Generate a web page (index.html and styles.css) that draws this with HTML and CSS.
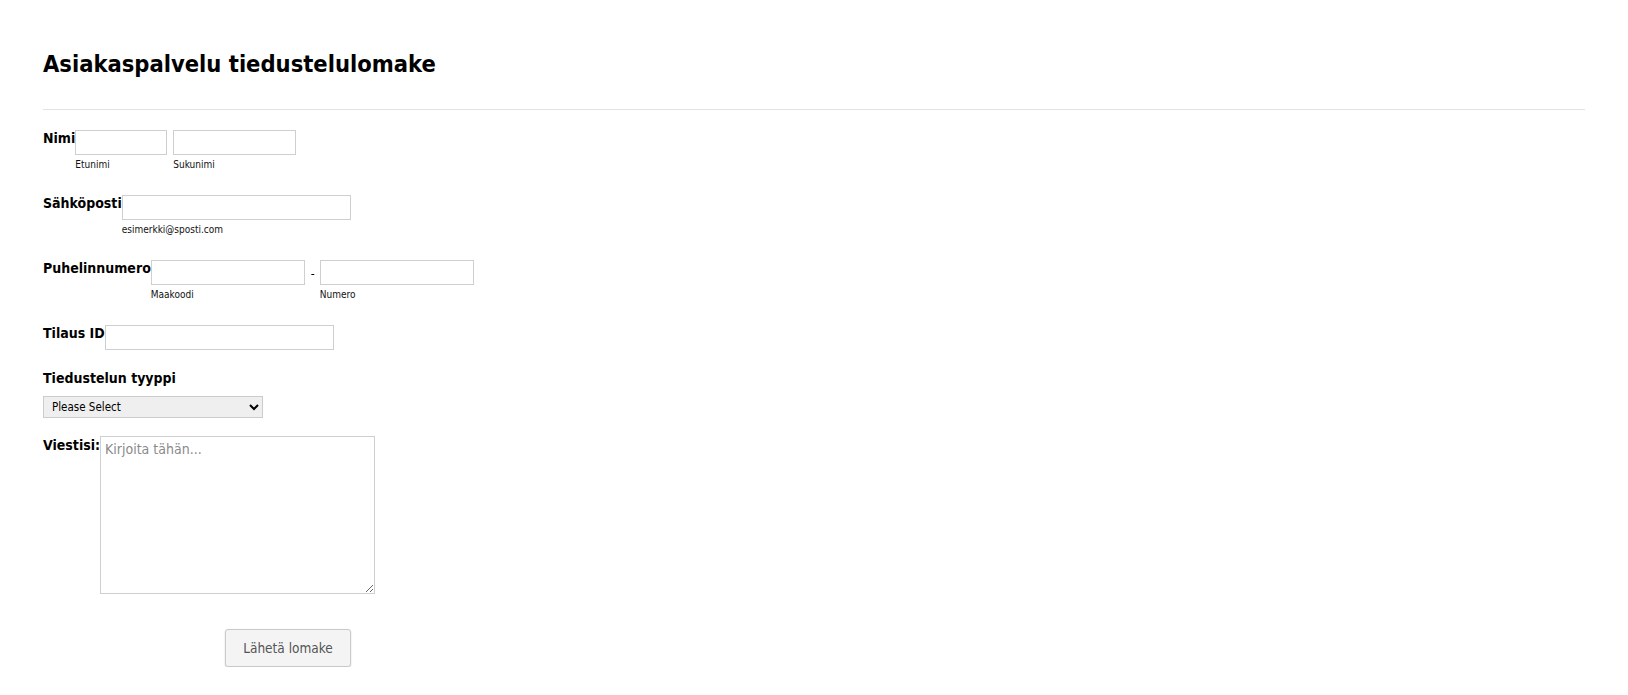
FILE: index.html
```
<!DOCTYPE html>
<html lang="fi">

<head>
  <meta charset="UTF-8" />
  <title>Asiakaspalvelu tiedustelulomake</title>
  <link rel="stylesheet" href="styles.css">
</head>

<body>
  <form class="inquiry-form">
    <h1 class="form-title">Asiakaspalvelu tiedustelulomake</h1>

    <div class="form-row">
      <label class="row-label">Nimi</label>
      <div class="field">
        <input type="text" class="input-first">
        <span class="sublabel">Etunimi</span>
      </div>
      <div class="field">
        <input type="text" class="input-last">
        <span class="sublabel">Sukunimi</span>
      </div>
    </div>

    <div class="form-row">
      <label class="row-label">Sähköposti</label>
      <div class="field">
        <input type="email" class="input-wide">
        <span class="sublabel">esimerkki@sposti.com</span>
      </div>
    </div>

    <div class="form-row">
      <label class="row-label">Puhelinnumero</label>
      <div class="field">
        <input type="tel" class="input-phone">
        <span class="sublabel">Maakoodi</span>
      </div>
      <span class="dash">-</span>
      <div class="field">
        <input type="tel" class="input-phone">
        <span class="sublabel">Numero</span>
      </div>
    </div>

    <div class="form-row no-sub">
      <label class="row-label">Tilaus ID</label>
      <div class="field">
        <input type="text" class="input-wide">
      </div>
    </div>

    <div class="form-block">
      <label class="block-label">Tiedustelun tyyppi</label>
      <select class="type-select">
        <option>Please Select</option>
        <option>Tilaus</option>
        <option>Toimitus</option>
        <option>Palautus</option>
        <option>Muu</option>
      </select>
    </div>

    <div class="form-row message-row">
      <label class="row-label msg-label">Viestisi:</label>
      <textarea class="message" placeholder="Kirjoita tähän..."></textarea>
    </div>

    <div class="button-row">
      <button type="submit" class="submit-btn">Lähetä lomake</button>
    </div>
  </form>
</body>

</html>
```

FILE: styles.css
```
body {
  margin: 0;
  font-family: "DejaVu Sans Condensed", "DejaVu Sans", sans-serif;
  color: #000;
  background: #fff;
}

.inquiry-form {
  padding: 0 43px;
}

.form-title {
  margin: 0 0 20px;
  padding-top: 49px;
  padding-bottom: 30px;
  font-size: 23.5px;
  line-height: 30px;
  font-weight: bold;
  border-bottom: 1px solid #e2e2e2;
}

.form-row {
  display: flex;
  align-items: flex-start;
  margin-bottom: 24px;
}

.form-row.no-sub {
  margin-bottom: 20px;
}

.row-label {
  font-size: 14px;
  font-weight: bold;
  line-height: 17px;
}

.field {
  display: flex;
  flex-direction: column;
  margin-right: 6px;
}

.field input {
  height: 25px;
  box-sizing: border-box;
  border: 1px solid #cfcfcf;
  padding: 2px 4px;
  font-family: inherit;
  font-size: 12px;
}

.input-first {
  width: 92px;
}

.input-last {
  width: 123px;
}

.input-wide {
  width: 229px;
}

.input-phone {
  width: 154px;
}

.sublabel {
  font-size: 10px;
  line-height: 12px;
  margin-top: 4px;
  color: #111;
}

.dash {
  font-size: 12px;
  line-height: 16px;
  padding-top: 6px;
  margin: 0 5px 0 0;
}

.form-block {
  margin-bottom: 18px;
}

.block-label {
  display: block;
  font-size: 14px;
  font-weight: bold;
  line-height: 17px;
  margin-bottom: 9px;
}

.type-select {
  display: block;
  width: 220px;
  height: 22px;
  background: #efefef;
  border: 1px solid #cccccc;
  font-family: inherit;
  font-size: 11.5px;
  padding: 0 4px;
}

.msg-label {
  padding-top: 1px;
}

.message {
  width: 275px;
  height: 158px;
  box-sizing: border-box;
  border: 1px solid #cfcfcf;
  padding: 4px;
  font-family: inherit;
  font-size: 14px;
  resize: both;
}

.message::placeholder {
  color: #8a8a8a;
}

.button-row {
  padding-left: 182px;
  margin-top: 35px;
}

.submit-btn {
  width: 126px;
  height: 38px;
  background: #f4f4f4;
  border: 1px solid #c9c9c9;
  border-radius: 3px;
  box-shadow: 0 1px 2px rgba(0, 0, 0, 0.15);
  color: #555;
  font-family: inherit;
  font-size: 13.5px;
  cursor: pointer;
}
```
